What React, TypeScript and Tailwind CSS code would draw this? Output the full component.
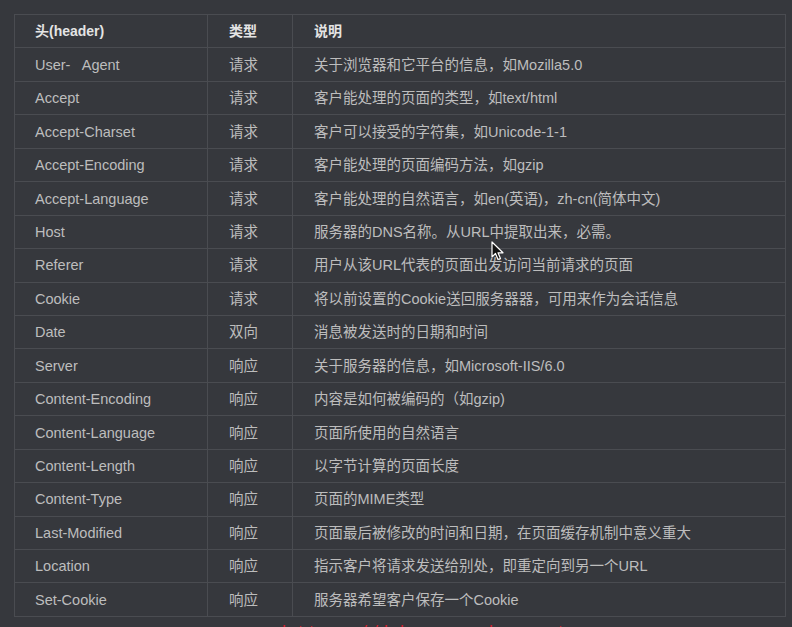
import React from 'react';

const rows: Array<[string, string, string]> = [
  ['User-\u00a0\u00a0 Agent', '请求', '关于浏览器和它平台的信息，如Mozilla5.0'],
  ['Accept', '请求', '客户能处理的页面的类型，如text/html'],
  ['Accept-Charset', '请求', '客户可以接受的字符集，如Unicode-1-1'],
  ['Accept-Encoding', '请求', '客户能处理的页面编码方法，如gzip'],
  ['Accept-Language', '请求', '客户能处理的自然语言，如en(英语)，zh-cn(简体中文)'],
  ['Host', '请求', '服务器的DNS名称。从URL中提取出来，必需。'],
  ['Referer', '请求', '用户从该URL代表的页面出发访问当前请求的页面'],
  ['Cookie', '请求', '将以前设置的Cookie送回服务器器，可用来作为会话信息'],
  ['Date', '双向', '消息被发送时的日期和时间'],
  ['Server', '响应', '关于服务器的信息，如Microsoft-IIS/6.0'],
  ['Content-Encoding', '响应', '内容是如何被编码的（如gzip)'],
  ['Content-Language', '响应', '页面所使用的自然语言'],
  ['Content-Length', '响应', '以字节计算的页面长度'],
  ['Content-Type', '响应', '页面的MIME类型'],
  ['Last-Modified', '响应', '页面最后被修改的时间和日期，在页面缓存机制中意义重大'],
  ['Location', '响应', '指示客户将请求发送给别处，即重定向到另一个URL'],
  ['Set-Cookie', '响应', '服务器希望客户保存一个Cookie'],
];

const font = { fontFamily: '"Liberation Sans", "Noto Sans CJK SC", sans-serif' };

export default function App() {
  return (
    <div className="relative w-[792px] h-[627px] overflow-hidden bg-[#36383d]" style={font}>
      <div className="pt-[14px] pl-[14px]">
        <table className="w-[772px] border-collapse table-fixed">
          <colgroup>
            <col className="w-[193px]" />
            <col className="w-[85px]" />
            <col />
          </colgroup>
          <thead>
            <tr className="h-[33.45px] text-[14px]">
              <th className="border border-[#4a4c51] pl-[20px] pt-[1px] text-left font-bold text-[#e4e4e4]">头(header)</th>
              <th className="border border-[#4a4c51] pl-[21px] pt-[1px] text-left font-bold text-[#e4e4e4]">类型</th>
              <th className="border border-[#4a4c51] pl-[21px] pt-[1px] text-left font-bold text-[#e4e4e4]">说明</th>
            </tr>
          </thead>
          <tbody className="text-[14.5px]">
            {rows.map((r) => (
              <tr key={r[0]} className="h-[33.45px]">
                <td className="border border-[#4a4c51] pl-[20px] pt-[2px] text-[#bdbdbd] whitespace-nowrap">{r[0]}</td>
                <td className="border border-[#4a4c51] pl-[21px] pt-[2px] text-[#bdbdbd]">{r[1]}</td>
                <td className="border border-[#4a4c51] pl-[21px] pt-[2px] text-[#bdbdbd] whitespace-nowrap">{r[2]}</td>
              </tr>
            ))}
          </tbody>
        </table>
        <div className="pl-[268px] pt-[6px] text-[18px] text-[#d0202c] leading-none tracking-[6px]">https://blog.csdn.net</div>
      </div>

      {/* mouse pointer */}
      <svg className="absolute left-[491px] top-[241px]" width="14" height="21" viewBox="0 0 14 21">
        <path d="M1 1 L1 16 L4.5 12.5 L7 18.5 L9.5 17.5 L7 11.8 L12 11.8 Z" fill="#111" stroke="#fff" strokeWidth="1.2" strokeLinejoin="round" />
      </svg>
    </div>
  );
}
